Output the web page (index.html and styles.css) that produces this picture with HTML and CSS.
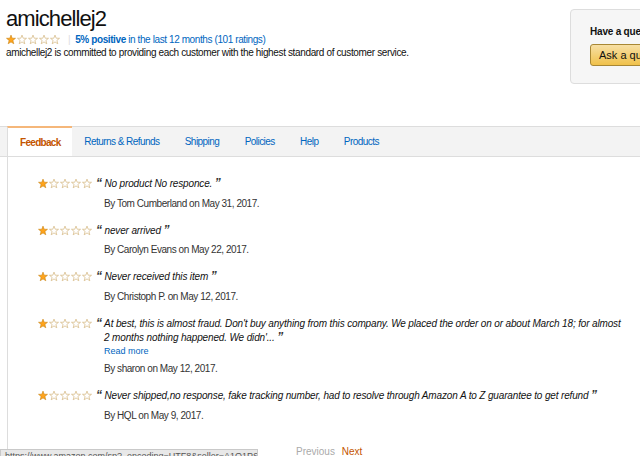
FILE: index.html
```html
<!DOCTYPE html>
<html>
<head>
    <title>amichellej2 - Seller Profile</title>
    <link rel="stylesheet" href="styles.css">
</head>
<body>
    <svg width="0" height="0" class="defs">
        <symbol id="star" viewBox="0 0 10 10">
            <polygon points="5,0.6 6.2,3.7 9.5,3.8 6.9,5.9 7.8,9.3 5,7.4 2.2,9.3 3.1,5.9 0.5,3.8 3.8,3.7"/>
        </symbol>
    </svg>

    <div class="header">
        <div class="seller">
            <h1>amichellej2</h1>
            <div class="rating-line">
                <svg class="stars" width="55" height="11" viewBox="0 0 55 11">
                    <use href="#star" x="0" y="0.5" width="10" height="10" class="on"/>
                    <use href="#star" x="11" y="0.5" width="10" height="10" class="off"/>
                    <use href="#star" x="22" y="0.5" width="10" height="10" class="off"/>
                    <use href="#star" x="33" y="0.5" width="10" height="10" class="off"/>
                    <use href="#star" x="44" y="0.5" width="10" height="10" class="off"/>
                </svg>
                <span class="sep">|</span>
                <a href="#" class="positive"><b>5% positive</b> in the last 12 months (101 ratings)</a>
            </div>
            <p class="about">amichellej2 is committed to providing each customer with the highest standard of customer service.</p>
        </div>
        <div class="ask-col">
            <div class="ask-box">
                <p>Have a question for amichellej2?</p>
                <button class="ask-btn">Ask a question</button>
            </div>
        </div>
    </div>

    <ul class="tabs">
        <li class="active">Feedback</li>
        <li>Returns &amp; Refunds</li>
        <li>Shipping</li>
        <li>Policies</li>
        <li>Help</li>
        <li>Products</li>
    </ul>

    <div class="panel">
        <div class="review">
            <svg class="stars" width="55" height="11" viewBox="0 0 55 11">
                <use href="#star" x="0" y="0.5" width="10" height="10" class="on"/>
                <use href="#star" x="11" y="0.5" width="10" height="10" class="off"/>
                <use href="#star" x="22" y="0.5" width="10" height="10" class="off"/>
                <use href="#star" x="33" y="0.5" width="10" height="10" class="off"/>
                <use href="#star" x="44" y="0.5" width="10" height="10" class="off"/>
            </svg>
            <div class="body">
                <p class="quote"><span class="q">&ldquo;</span> No product No responce. <span class="q">&rdquo;</span></p>
                <p class="by">By Tom Cumberland on May 31, 2017.</p>
            </div>
        </div>
        <div class="review">
            <svg class="stars" width="55" height="11" viewBox="0 0 55 11">
                <use href="#star" x="0" y="0.5" width="10" height="10" class="on"/>
                <use href="#star" x="11" y="0.5" width="10" height="10" class="off"/>
                <use href="#star" x="22" y="0.5" width="10" height="10" class="off"/>
                <use href="#star" x="33" y="0.5" width="10" height="10" class="off"/>
                <use href="#star" x="44" y="0.5" width="10" height="10" class="off"/>
            </svg>
            <div class="body">
                <p class="quote"><span class="q">&ldquo;</span> never arrived <span class="q">&rdquo;</span></p>
                <p class="by">By Carolyn Evans on May 22, 2017.</p>
            </div>
        </div>
        <div class="review">
            <svg class="stars" width="55" height="11" viewBox="0 0 55 11">
                <use href="#star" x="0" y="0.5" width="10" height="10" class="on"/>
                <use href="#star" x="11" y="0.5" width="10" height="10" class="off"/>
                <use href="#star" x="22" y="0.5" width="10" height="10" class="off"/>
                <use href="#star" x="33" y="0.5" width="10" height="10" class="off"/>
                <use href="#star" x="44" y="0.5" width="10" height="10" class="off"/>
            </svg>
            <div class="body">
                <p class="quote"><span class="q">&ldquo;</span> Never received this item <span class="q">&rdquo;</span></p>
                <p class="by">By Christoph P. on May 12, 2017.</p>
            </div>
        </div>
        <div class="review">
            <svg class="stars" width="55" height="11" viewBox="0 0 55 11">
                <use href="#star" x="0" y="0.5" width="10" height="10" class="on"/>
                <use href="#star" x="11" y="0.5" width="10" height="10" class="off"/>
                <use href="#star" x="22" y="0.5" width="10" height="10" class="off"/>
                <use href="#star" x="33" y="0.5" width="10" height="10" class="off"/>
                <use href="#star" x="44" y="0.5" width="10" height="10" class="off"/>
            </svg>
            <div class="body">
                <p class="quote"><span class="q">&ldquo;</span> At best, this is almost fraud. Don't buy anything from this company. We placed the order on or about March 18; for almost 2 months nothing happened. We didn'... <span class="q">&rdquo;</span></p>
                <a href="#" class="more">Read more</a>
                <p class="by">By sharon on May 12, 2017.</p>
            </div>
        </div>
        <div class="review">
            <svg class="stars" width="55" height="11" viewBox="0 0 55 11">
                <use href="#star" x="0" y="0.5" width="10" height="10" class="on"/>
                <use href="#star" x="11" y="0.5" width="10" height="10" class="off"/>
                <use href="#star" x="22" y="0.5" width="10" height="10" class="off"/>
                <use href="#star" x="33" y="0.5" width="10" height="10" class="off"/>
                <use href="#star" x="44" y="0.5" width="10" height="10" class="off"/>
            </svg>
            <div class="body">
                <p class="quote"><span class="q">&ldquo;</span> Never shipped,no response, fake tracking number, had to resolve through Amazon A to Z guarantee to get refund <span class="q">&rdquo;</span></p>
                <p class="by">By HQL on May 9, 2017.</p>
            </div>
        </div>

        <div class="pager">
            <span class="prev">Previous</span>
            <a href="#" class="next">Next</a>
        </div>
    </div>

    <div class="status">https://www.amazon.com/sp?_encoding=UTF8&amp;seller=A1Q1PS7KYMZEB7</div>
</body>
</html>
```

FILE: styles.css
```css
body {
    margin: 0;
    padding: 0;
    font-family: "Liberation Sans", Arial, sans-serif;
    color: #111111;
    background: #ffffff;
    overflow: hidden;
    height: 456px;
}
.defs {
    position: absolute;
}
a {
    color: #0066c0;
    text-decoration: none;
}
.stars .on {
    fill: #ffa41c;
    stroke: #c9861a;
    stroke-width: 0.6px;
}
.stars .off {
    fill: #ffffff;
    stroke: #d2b47c;
    stroke-width: 0.7px;
}

/* header */
.header {
    display: grid;
    grid-template-columns: 1fr 70px;
    height: 126px;
}
.seller {
    padding: 6px 0 0 6px;
}
.seller h1 {
    margin: 0;
    font-size: 22px;
    font-weight: normal;
    letter-spacing: -0.9px;
    line-height: 26px;
}
.rating-line {
    display: flex;
    align-items: center;
    height: 14px;
    margin-top: 0;
    font-size: 10px;
    letter-spacing: -0.4px;
}
.rating-line .sep {
    color: #dddddd;
    margin: 0 5px 0 7px;
}
.about {
    margin: 0;
    font-size: 10px;
    letter-spacing: -0.36px;
    line-height: 14px;
}
.ask-col {
    padding-top: 9px;
}
.ask-box {
    width: 110px;
    height: 75px;
    box-sizing: border-box;
    background: #f6f6f6;
    border: 1px solid #dddddd;
    border-radius: 4px;
    padding: 15px 0 0 19px;
    white-space: nowrap;
    overflow: hidden;
}
.ask-box p {
    margin: 0 0 6px;
    font-size: 10px;
    font-weight: bold;
    letter-spacing: -0.2px;
    line-height: 13px;
}
.ask-btn {
    height: 22px;
    padding: 0 8px;
    border: 1px solid #a88734;
    border-radius: 3px;
    background: linear-gradient(#f7dfa5, #f0c14b);
    font-family: inherit;
    font-size: 11px;
    color: #111111;
}

/* tabs */
.tabs {
    display: flex;
    margin: 0;
    padding: 0;
    list-style: none;
    height: 29px;
    background: #f3f3f3;
    border-top: 1px solid #dddddd;
    border-bottom: 1px solid #dddddd;
    font-size: 10px;
    letter-spacing: -0.55px;
}
.tabs li {
    display: flex;
    align-items: center;
    padding: 0 12.7px;
    color: #0066c0;
}
.tabs li.active {
    margin: -1px 0 -1px 7px;
    padding: 0 11px 0 12px;
    background: #ffffff;
    color: #c45500;
    font-weight: bold;
    letter-spacing: -0.7px;
    border-top: 2px solid #f5b77a;
    border-left: 1px solid #dddddd;
    height: 30px;
    box-sizing: border-box;
}

/* feedback list */
.panel {
    margin-left: 7px;
    border-left: 1px solid #dddddd;
    padding: 20px 0 0 30px;
    height: 299px;
}
.review {
    display: flex;
    align-items: flex-start;
    margin-bottom: 13px;
}
.review .stars {
    flex-shrink: 0;
    margin: 1px 3px 0 0;
}
.review .body {
    padding-left: 8px;
    font-size: 10px;
}
.quote {
    margin: 0;
    text-indent: -8px;
    font-style: italic;
    letter-spacing: -0.15px;
    line-height: 14px;
    max-width: 520px;
}
.quote .q {
    font-size: 12px;
    line-height: 10px;
    font-weight: bold;
    color: #333333;
}
.more {
    display: block;
    font-size: 9px;
    line-height: 12px;
    margin-bottom: 3px;
}
.by {
    margin: 5.5px 0 0;
    line-height: 14px;
    letter-spacing: -0.45px;
    color: #333333;
}
.pager {
    padding: 10px 0 0 258px;
    font-size: 10px;
    line-height: 12px;
}
.pager .prev {
    color: #aaaaaa;
    margin-right: 4px;
}
.pager .next {
    color: #c45500;
}

/* browser status overlay */
.status {
    position: absolute;
    left: 0;
    top: 449px;
    width: 258px;
    height: 14px;
    box-sizing: border-box;
    padding: 1px 4px;
    background: #e8e8e8;
    border: 1px solid #c9c9c9;
    font-size: 9px;
    color: #555555;
    white-space: nowrap;
    overflow: hidden;
}
```
